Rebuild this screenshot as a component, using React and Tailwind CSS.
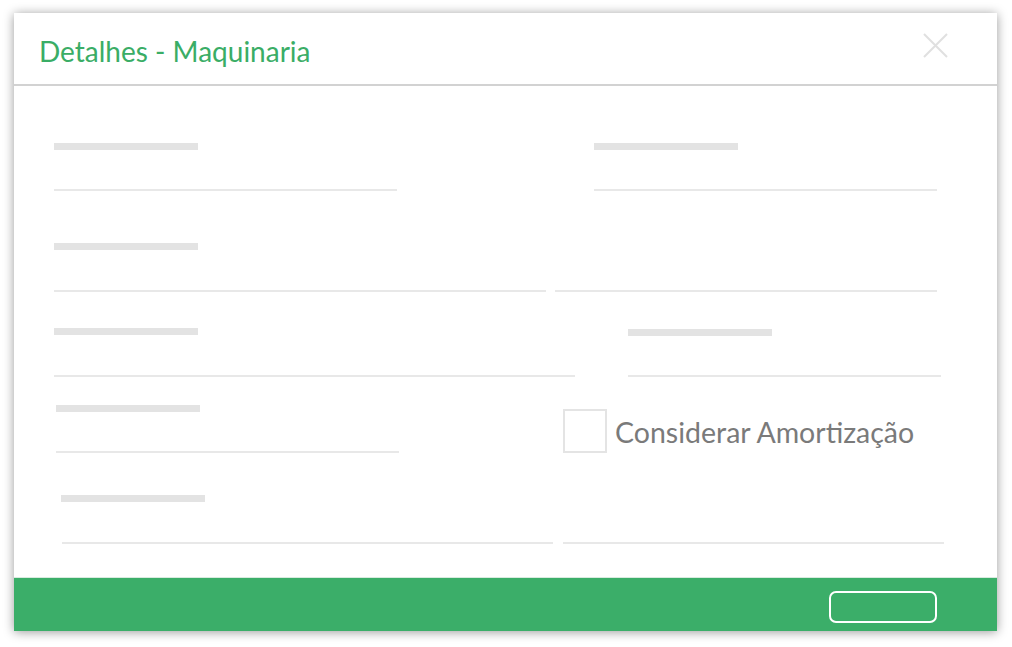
import React from "react";

function Field({ width, labelMl = 0, className = "", gap = "mt-[39px]", noLabel = false }) {
  return (
    <div className={"flex flex-col " + className} style={{ width }}>
      {noLabel ? null : (
        <div className="h-[7px] w-[144px] bg-[#e3e3e3]" style={{ marginLeft: labelMl }} />
      )}
      <div className={(noLabel ? "" : gap + " ") + "h-[2px] w-full bg-[#e8e8e8]"} />
    </div>
  );
}

export default function App() {
  return (
    <div className="w-[1012px] h-[647px] bg-white pt-[13px] pl-[14px]" style={{ fontFamily: "Lato, 'Open Sans', sans-serif" }}>
      <div className="w-[983px] h-[618px] bg-white flex flex-col shadow-[0_1px_10px_rgba(0,0,0,0.4)]">
        {/* header */}
        <div className="h-[73px] shrink-0 flex items-start justify-between border-b-2 border-[#d2d2d2] pl-[25px] pr-[49px]">
          <h1 className="mt-[20px] text-[28px] leading-[36px] text-[#3aad66]">Detalhes - Maquinaria</h1>
          <svg width="25" height="25" viewBox="0 0 25 25" className="mt-[20px]">
            <path d="M1 1 L24 24 M24 1 L1 24" stroke="#e0e0e0" strokeWidth="2" fill="none" />
          </svg>
        </div>

        {/* body */}
        <div className="flex-1 flex flex-col pl-[40px] pt-[57px] border-b border-[#d8ebdf]">
          {/* row 1 */}
          <div className="flex items-end">
            <Field width={343} />
            <Field width={343} className="ml-[197px]" />
          </div>
          {/* row 2 */}
          <div className="flex items-end mt-[52px]">
            <Field width={492} gap="mt-[40px]" />
            <Field width={382} className="ml-[9px]" noLabel />
          </div>
          {/* row 3 */}
          <div className="flex items-end mt-[36px]">
            <Field width={521} gap="mt-[40px]" />
            <Field width={313} className="ml-[53px]" gap="mt-[39px]" />
          </div>
          {/* row 4 */}
          <div className="flex items-end mt-[28px]">
            <Field width={343} className="ml-[2px]" gap="mt-[39px]" />
            <div className="flex items-center ml-[164px]">
              <div className="w-[44px] h-[44px] border-2 border-[#e4e4e4] bg-white" />
              <span className="ml-[8px] text-[28.5px] leading-[34px] text-[#7a7a7a] mt-[1px]">Considerar Amortização</span>
            </div>
          </div>
          {/* row 5 */}
          <div className="flex items-end mt-[42px]">
            <Field width={491} className="ml-[8px]" labelMl={-1} gap="mt-[40px]" />
            <Field width={381} className="ml-[10px]" noLabel />
          </div>
        </div>

        {/* footer */}
        <div className="h-[53px] shrink-0 bg-[#3bae69] flex items-start justify-end pr-[60px] pt-[13px]">
          <button className="w-[108px] h-[32px] rounded-[7px] border-2 border-white" />
        </div>
      </div>
    </div>
  );
}
